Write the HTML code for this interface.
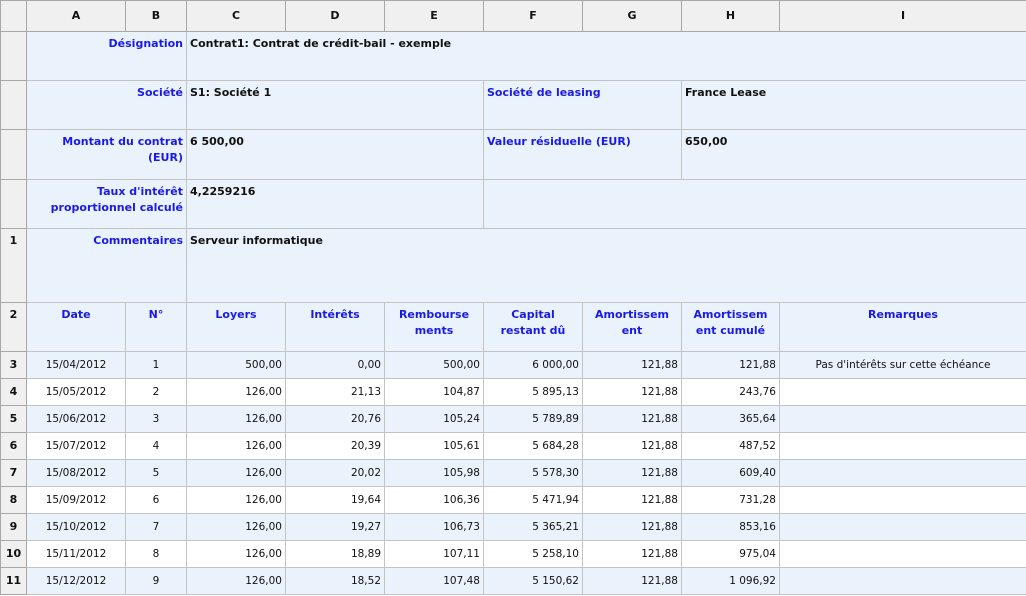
<!DOCTYPE html>
<html><head><meta charset="utf-8"><style>
body{margin:0;width:1026px;height:596px;overflow:hidden;background:#fff;font-family:"DejaVu Sans","Liberation Sans",sans-serif;font-size:10.5px;}
table{border-collapse:collapse;table-layout:fixed;width:1026px;}
td{border:1px solid #c4c4c4;padding:4px 3px 0 3px;vertical-align:top;overflow:hidden;white-space:nowrap;line-height:16px;background:#eaf3fc;color:#111;}
tr.h td{background:#f0f0f0;font-weight:bold;font-size:11px;text-align:center;vertical-align:middle;padding:0;border-color:#a8a8a8;}
td.rh{background:#f0f0f0;font-weight:bold;font-size:11px;text-align:center;padding:4px 0 0 0;border-color:#a8a8a8;}
.l{color:#1a1ae6;font-weight:bold;font-size:11px;text-align:right;}
.v{font-weight:bold;font-size:11px;}
tr.c td{text-align:center;color:#1a1ae6;font-weight:bold;font-size:11px;}
tr.c td.rh{color:#111;}
.r{text-align:right;}.c{text-align:center;}
tr.w td{background:#fff;}
tr.w td.rh{background:#f0f0f0;}
tr.d td{padding-top:5px;}
</style></head><body>
<table>
<colgroup><col style="width:26px"><col style="width:99px"><col style="width:61px"><col style="width:99px"><col style="width:99px"><col style="width:99px"><col style="width:99px"><col style="width:99px"><col style="width:98px"><col style="width:247px"></colgroup>
<tr class="h" style="height:31px"><td></td><td>A</td><td>B</td><td>C</td><td>D</td><td>E</td><td>F</td><td>G</td><td>H</td><td>I</td></tr>
<tr style="height:49px"><td class="rh"></td><td colspan="2" class="l">Désignation</td><td colspan="7" class="v">Contrat1: Contrat de crédit-bail - exemple</td></tr>
<tr style="height:49px"><td class="rh"></td><td colspan="2" class="l">Société</td><td colspan="3" class="v">S1: Société 1</td><td colspan="2" class="l" style="text-align:left">Société de leasing</td><td colspan="2" class="v">France Lease</td></tr>
<tr style="height:50px"><td class="rh"></td><td colspan="2" class="l">Montant du contrat<br>(EUR)</td><td colspan="3" class="v">6 500,00</td><td colspan="2" class="l" style="text-align:left">Valeur résiduelle (EUR)</td><td colspan="2" class="v">650,00</td></tr>
<tr style="height:49px"><td class="rh"></td><td colspan="2" class="l">Taux d'intérêt<br>proportionnel calculé</td><td colspan="3" class="v">4,2259216</td><td colspan="4"></td></tr>
<tr style="height:74px"><td class="rh">1</td><td colspan="2" class="l">Commentaires</td><td colspan="7" class="v">Serveur informatique</td></tr>
<tr class="c" style="height:49px"><td class="rh">2</td><td>Date</td><td>N°</td><td>Loyers</td><td>Intérêts</td><td>Rembourse<br>ments</td><td>Capital<br>restant dû</td><td>Amortissem<br>ent</td><td>Amortissem<br>ent cumulé</td><td>Remarques</td></tr>
<tr class="d" style="height:27px"><td class="rh">3</td><td class="c">15/04/2012</td><td class="c">1</td><td class="r">500,00</td><td class="r">0,00</td><td class="r">500,00</td><td class="r">6 000,00</td><td class="r">121,88</td><td class="r">121,88</td><td class="c">Pas d'intérêts sur cette échéance</td></tr>
<tr class="d w" style="height:27px"><td class="rh">4</td><td class="c">15/05/2012</td><td class="c">2</td><td class="r">126,00</td><td class="r">21,13</td><td class="r">104,87</td><td class="r">5 895,13</td><td class="r">121,88</td><td class="r">243,76</td><td></td></tr>
<tr class="d" style="height:27px"><td class="rh">5</td><td class="c">15/06/2012</td><td class="c">3</td><td class="r">126,00</td><td class="r">20,76</td><td class="r">105,24</td><td class="r">5 789,89</td><td class="r">121,88</td><td class="r">365,64</td><td></td></tr>
<tr class="d w" style="height:27px"><td class="rh">6</td><td class="c">15/07/2012</td><td class="c">4</td><td class="r">126,00</td><td class="r">20,39</td><td class="r">105,61</td><td class="r">5 684,28</td><td class="r">121,88</td><td class="r">487,52</td><td></td></tr>
<tr class="d" style="height:27px"><td class="rh">7</td><td class="c">15/08/2012</td><td class="c">5</td><td class="r">126,00</td><td class="r">20,02</td><td class="r">105,98</td><td class="r">5 578,30</td><td class="r">121,88</td><td class="r">609,40</td><td></td></tr>
<tr class="d w" style="height:27px"><td class="rh">8</td><td class="c">15/09/2012</td><td class="c">6</td><td class="r">126,00</td><td class="r">19,64</td><td class="r">106,36</td><td class="r">5 471,94</td><td class="r">121,88</td><td class="r">731,28</td><td></td></tr>
<tr class="d" style="height:27px"><td class="rh">9</td><td class="c">15/10/2012</td><td class="c">7</td><td class="r">126,00</td><td class="r">19,27</td><td class="r">106,73</td><td class="r">5 365,21</td><td class="r">121,88</td><td class="r">853,16</td><td></td></tr>
<tr class="d w" style="height:27px"><td class="rh">10</td><td class="c">15/11/2012</td><td class="c">8</td><td class="r">126,00</td><td class="r">18,89</td><td class="r">107,11</td><td class="r">5 258,10</td><td class="r">121,88</td><td class="r">975,04</td><td></td></tr>
<tr class="d" style="height:27px"><td class="rh">11</td><td class="c">15/12/2012</td><td class="c">9</td><td class="r">126,00</td><td class="r">18,52</td><td class="r">107,48</td><td class="r">5 150,62</td><td class="r">121,88</td><td class="r">1 096,92</td><td></td></tr>
</table>
</body></html>
